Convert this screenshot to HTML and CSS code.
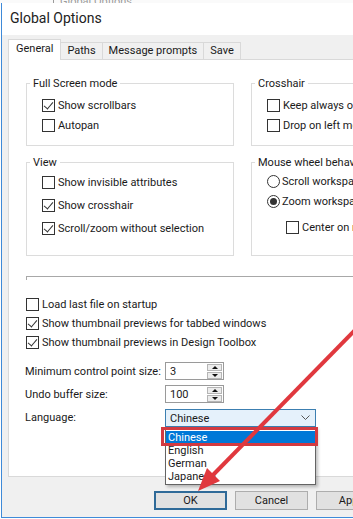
FILE: index.html
```html
<!DOCTYPE html>
<html lang="en">
<head>
    <meta charset="UTF-8">
    <title>Global Options</title>
    <link rel="stylesheet" href="styles.css">
</head>
<body>
    <div class="ghost"><span class="ghost-bar"></span><span>Global Options</span></div>

    <div class="window">
        <div class="titlebar">Global Options</div>

        <div class="client">
            <div class="tabs">
                <div class="tab active">General</div>
                <div class="tab">Paths</div>
                <div class="tab">Message prompts</div>
                <div class="tab">Save</div>
            </div>

            <div class="panel">
                <div class="groups">
                    <fieldset class="group short">
                        <legend>Full Screen mode</legend>
                        <div class="opt"><span class="cb on"></span>Show scrollbars</div>
                        <div class="opt"><span class="cb"></span>Autopan</div>
                    </fieldset>
                    <fieldset class="group short">
                        <legend>Crosshair</legend>
                        <div class="opt"><span class="cb"></span>Keep always on top of other windows</div>
                        <div class="opt"><span class="cb"></span>Drop on left mouse button</div>
                    </fieldset>
                    <fieldset class="group tall">
                        <legend>View</legend>
                        <div class="opt wide"><span class="cb"></span>Show invisible attributes</div>
                        <div class="opt wide"><span class="cb on"></span>Show crosshair</div>
                        <div class="opt wide"><span class="cb on"></span>Scroll/zoom without selection</div>
                    </fieldset>
                    <fieldset class="group tall">
                        <legend>Mouse wheel behaviour</legend>
                        <div class="opt radio-row"><span class="rb"></span>Scroll workspace</div>
                        <div class="opt radio-row"><span class="rb on"></span>Zoom workspace</div>
                        <div class="opt sub"><span class="cb"></span>Center on mouse position</div>
                    </fieldset>
                </div>

                <div class="separator"></div>

                <div class="checks">
                    <div class="opt flat"><span class="cb"></span>Load last file on startup</div>
                    <div class="opt flat"><span class="cb on"></span>Show thumbnail previews for tabbed windows</div>
                    <div class="opt flat"><span class="cb on"></span>Show thumbnail previews in Design Toolbox</div>
                </div>

                <div class="fields">
                    <div class="field">
                        <span class="field-label">Minimum control point size:</span>
                        <div class="spin"><span class="spin-value">3</span><span class="spin-btns"><span class="up"></span><span class="down"></span></span></div>
                    </div>
                    <div class="field">
                        <span class="field-label">Undo buffer size:</span>
                        <div class="spin"><span class="spin-value">100</span><span class="spin-btns"><span class="up"></span><span class="down"></span></span></div>
                    </div>
                    <div class="field lang">
                        <span class="field-label">Language:</span>
                        <div class="combo-wrap">
                            <div class="combo">
                                <span>Chinese</span>
                                <svg class="chevron" width="9" height="6" viewBox="0 0 9 6"><path d="M0.5 0.5 L4.5 4.5 L8.5 0.5" fill="none" stroke="#555" stroke-width="1"/></svg>
                            </div>
                            <div class="dropdown">
                                <div class="item selected">Chinese</div>
                                <div class="item">English</div>
                                <div class="item">German</div>
                                <div class="item">Japanese</div>
                            </div>
                            <div class="mark"></div>
                        </div>
                    </div>
                </div>
            </div>

            <div class="buttons">
                <button class="btn default">OK</button>
                <button class="btn">Cancel</button>
                <button class="btn">Apply</button>
            </div>
        </div>
    </div>

    <!-- annotation arrow -->
    <svg class="arrow" width="353" height="519" viewBox="0 0 353 519">
        <line x1="356" y1="329" x2="212" y2="476" stroke="#e0383e" stroke-width="4"/>
        <polygon points="198,491 220,481 207,468" fill="#e0383e"/>
    </svg>
</body>
</html>
```

FILE: styles.css
```css
/* General */
* {
    box-sizing: border-box;
    margin: 0;
    padding: 0;
}

body {
    width: 353px;
    height: 519px;
    overflow: hidden;
    position: relative;
    background: #ffffff;
    font-family: Roboto, "Noto Sans", sans-serif;
    font-size: 11px;
    color: #1a1a1a;
}

/* window behind */
.ghost {
    height: 3px;
    overflow: hidden;
    display: flex;
    padding-left: 53px;
    background: #fafafa;
    color: #9a9a9a;
    font-size: 11px;
    line-height: 4px;
}

.ghost-bar {
    width: 1px;
    height: 3px;
    background: #9a9a9a;
    margin-right: 6px;
}

/* Dialog */
.window {
    width: 470px;
    height: 515px;
    margin-left: 1px;
    border-left: 1px solid #3f8ad8;
    border-bottom: 1px solid #3f8ad8;
    display: flex;
    flex-direction: column;
}

.titlebar {
    height: 32px;
    line-height: 31px;
    padding-left: 8px;
    font-size: 14px;
    color: #222;
    background: #ffffff;
}

.client {
    flex: 1;
    background: #f0f0f0;
    padding: 4px 0 0 6px;
}

/* Tabs */
.tabs {
    display: flex;
    align-items: flex-end;
    height: 20px;
}

.tab {
    height: 17px;
    line-height: 16px;
    padding: 0 6px;
    border: 1px solid #d9d9d9;
    border-bottom: none;
    border-left: none;
    background: #f0f0f0;
}

.tab.active {
    height: 21px;
    line-height: 18px;
    margin-bottom: -1px;
    padding: 0 7px;
    background: #ffffff;
    border-left: 1px solid #d9d9d9;
    position: relative;
    z-index: 1;
}

.panel {
    height: 418px;
    background: #ffffff;
    border: 1px solid #d9d9d9;
    padding: 16px 0 0 17px;
}

/* Group boxes */
.groups {
    display: grid;
    grid-template-columns: 208px 208px;
    column-gap: 17px;
    row-gap: 9px;
}

.group {
    border: 1px solid #dcdcdc;
    padding: 4px 0 0 15px;
    min-width: 0;
}

.group legend {
    line-height: 15px;
    padding: 0 3px;
    margin-left: -12px;
}

.group.short {
    height: 70px;
}

.group.tall {
    height: 101px;
    padding-top: 1px;
}

.opt {
    display: flex;
    align-items: center;
    height: 20px;
    white-space: nowrap;
}

.opt.wide {
    height: 23px;
}

.opt.sub {
    margin: 6px 0 0 19px;
}

.opt.flat {
    height: 19px;
}

/* Checkboxes and radios */
.cb {
    width: 13px;
    height: 13px;
    border: 1px solid #333;
    background: #fff;
    margin-right: 3px;
    flex-shrink: 0;
    position: relative;
}

.cb.on::after {
    content: "";
    position: absolute;
    left: 3px;
    top: 0px;
    width: 4px;
    height: 8px;
    border-right: 1px solid #333;
    border-bottom: 1px solid #333;
    transform: rotate(40deg);
}

.rb {
    width: 13px;
    height: 13px;
    border: 1px solid #333;
    border-radius: 50%;
    background: #fff;
    margin-right: 2px;
    flex-shrink: 0;
    display: flex;
    align-items: center;
    justify-content: center;
}

.rb.on::after {
    content: "";
    width: 7px;
    height: 7px;
    border-radius: 50%;
    background: #333;
}

.separator {
    margin-top: 20px;
    height: 4px;
    border-top: 1px solid #a8a8a8;
    border-left: 1px solid #a8a8a8;
}

.checks {
    margin-top: 15px;
}

/* Number and combo fields */
.fields {
    margin-top: 10px;
    display: flex;
    flex-direction: column;
    gap: 5px;
}

.field {
    display: flex;
    align-items: center;
    height: 18px;
}

.field.lang {
    margin-top: 1px;
    align-items: flex-start;
}

.field-label {
    width: 140px;
    margin-left: -1px;
    white-space: nowrap;
}

.field.lang .field-label {
    line-height: 18px;
}

.spin {
    width: 59px;
    height: 18px;
    border: 1px solid #9a9a9a;
    display: flex;
    align-items: center;
    justify-content: space-between;
    padding: 0 1px 0 4px;
}

.spin-btns {
    display: flex;
    flex-direction: column;
    gap: 1px;
    width: 15px;
}

.spin-btns span {
    height: 7px;
    border: 1px solid #b5b5b5;
    background: #ececec;
    display: flex;
    justify-content: center;
    align-items: center;
}

.spin-btns .up::after {
    content: "";
    border: 3px solid transparent;
    border-top: none;
    border-bottom: 3px solid #111;
}

.spin-btns .down::after {
    content: "";
    border: 3px solid transparent;
    border-bottom: none;
    border-top: 3px solid #111;
}

.combo-wrap {
    position: relative;
}

.combo {
    width: 151px;
    height: 18px;
    background: #e5f1fb;
    border: 1px solid #3c7fb1;
    display: flex;
    align-items: center;
    justify-content: space-between;
    padding: 0 5px 0 4px;
}

.dropdown {
    position: absolute;
    top: 18px;
    left: 0;
    width: 151px;
    background: #fff;
    border: 1px solid #646464;
    padding: 3px 0 1px;
    box-shadow: 2px 2px 3px rgba(0, 0, 0, 0.25);
    z-index: 2;
}

.item {
    height: 13px;
    line-height: 13px;
    padding-left: 2px;
}

.item.selected {
    background: #0078d7;
    color: #fff;
}

.mark {
    position: absolute;
    left: -4px;
    top: 18px;
    width: 157px;
    height: 19px;
    border: 3px solid #d33a40;
    z-index: 3;
}

/* Buttons */
.buttons {
    display: flex;
    gap: 8px;
    margin-top: 14px;
    padding-left: 146px;
}

.btn {
    width: 73px;
    height: 19px;
    font-family: inherit;
    font-size: 11px;
    color: #1a1a1a;
    background: #e1e1e1;
    border: 1px solid #adadad;
}

.btn.default {
    border: 2px solid #2f6a98;
}

/* Arrow overlay */
.arrow {
    position: absolute;
    left: 0;
    top: 0;
    pointer-events: none;
    z-index: 5;
}
```
